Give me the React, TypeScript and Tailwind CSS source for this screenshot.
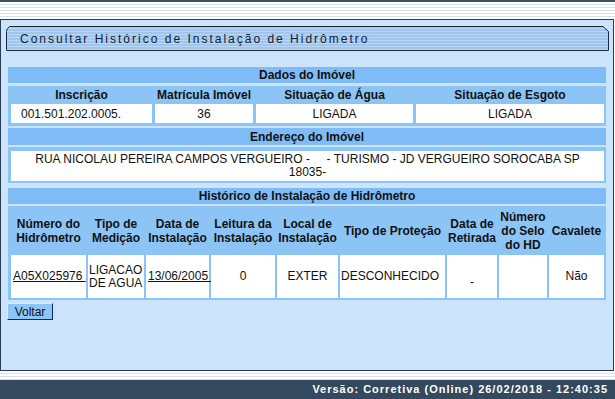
const dadosCols = "grid grid-cols-[141px_98px_157px_188px] gap-x-[3px]";
const histCols = "grid grid-cols-[75px_56px_63px_64px_61px_105px_50px_48px_55px] gap-x-[2px]";

function TitleTab() {
  return (
    <div className="relative ml-[5px] mt-[6px] h-[25px] w-[603px]">
      <svg className="absolute inset-0" width="603" height="25" viewBox="0 0 603 25">
        <defs>
          <pattern id="tabStripes" width="4" height="3" patternUnits="userSpaceOnUse">
            <rect width="4" height="3" fill="#9fc6ef" />
            <rect y="2" width="4" height="1" fill="#bad7f5" />
          </pattern>
        </defs>
        <path
          d="M0.5 24.5 L0.5 5.5 Q0.5 3.5 2 2 L3.5 0.5 L597 0.5 L602.5 5.5 L602.5 24.5 Z"
          fill="url(#tabStripes)"
          stroke="#1c2a3a"
          strokeWidth="1"
        />
      </svg>
      <div className="relative flex h-full items-center pl-[14px] text-[12px] tracking-[2px] text-[#14202e]">
        Consultar Histórico de Instalação de Hidrômetro
      </div>
    </div>
  );
}

function SectionHeader({ title, className }: { title: string; className?: string }) {
  return (
    <div className={"flex items-center justify-center bg-[#7fbcf7] font-bold " + (className ?? "")}>
      {title}
    </div>
  );
}

function App() {
  return (
    <div className="h-[399px] w-[615px] overflow-hidden bg-white font-['Liberation_Sans',Arial,sans-serif] text-[12px] text-[#111]">
      <div className="h-[2px] bg-[#3b5166]" />
      <div className="h-[17px] bg-[repeating-linear-gradient(to_bottom,#ffffff_0px,#ffffff_2px,#d3e1ea_2px,#d3e1ea_3px)]" />

      <div className="flex h-[352px] w-[614px] flex-col border border-[#2b3d50] bg-[#cbe4fb]">
        <TitleTab />

        <div className="ml-[7px] mt-[16px] flex w-[598px] flex-col">
          {/* Dados do Imóvel */}
          <SectionHeader title="Dados do Imóvel" className="h-[16px]" />
          <div className="mt-[3px] bg-[#8cc4f6] px-[3px] pb-[3px]">
            <div className={dadosCols + " h-[18px] items-center text-center font-bold"}>
              <div>Inscrição</div>
              <div>Matrícula Imóvel</div>
              <div>Situação de Água</div>
              <div>Situação de Esgoto</div>
            </div>
            <div className={dadosCols + " h-[19px]"}>
              <div className="flex items-center bg-white pl-[10px]">001.501.202.0005.</div>
              <div className="flex items-center justify-center bg-white">36</div>
              <div className="flex items-center justify-center bg-white">LIGADA</div>
              <div className="flex items-center justify-center bg-white">LIGADA</div>
            </div>
          </div>

          {/* Endereço do Imóvel */}
          <SectionHeader title="Endereço do Imóvel" className="mt-[2px] h-[17px]" />
          <div className="mt-[2px] bg-[#8cc4f6] px-[3px] pb-[2px] pt-[4px]">
            <div className="flex h-[30px] w-[593px] items-center justify-center bg-white text-center leading-[13px]">
              <div>
                RUA NICOLAU PEREIRA CAMPOS VERGUEIRO -&nbsp;&nbsp;&nbsp;&nbsp;&nbsp;- TURISMO - JD VERGUEIRO SOROCABA SP
                <br />
                18035-
              </div>
            </div>
          </div>

          {/* Histórico de Instalação de Hidrômetro */}
          <SectionHeader title="Histórico de Instalação de Hidrômetro" className="mt-[5px] h-[16px]" />
          <div className="mt-[2px] flex flex-col gap-y-[2px] bg-[#8cc4f6] px-[3px] pb-[2px] pt-[2px]">
            <div className={histCols + " h-[45px] items-center text-center font-bold leading-[14px]"}>
              <div>Número do<br />Hidrômetro</div>
              <div>Tipo de<br />Medição</div>
              <div>Data de<br />Instalação</div>
              <div>Leitura da<br />Instalação</div>
              <div>Local de<br />Instalação</div>
              <div>Tipo de Proteção</div>
              <div>Data de<br />Retirada</div>
              <div>Número<br />do Selo<br />do HD</div>
              <div>Cavalete</div>
            </div>
            <div className={histCols + " h-[43px] leading-[13px]"}>
              <div className="flex items-center bg-white pl-[2px]">
                <span className="underline">A05X025976&nbsp;</span>
              </div>
              <div className="flex items-center bg-white pl-[1px]">LIGACAO<br />DE AGUA</div>
              <div className="flex items-center bg-white pl-[2px]">
                <span className="underline">13/06/2005&nbsp;</span>
              </div>
              <div className="flex items-center justify-center bg-white">0</div>
              <div className="flex items-center justify-center bg-white">EXTER</div>
              <div className="flex items-center bg-white pl-[1px]">DESCONHECIDO</div>
              <div className="flex items-center justify-center bg-white pt-[12px]">-</div>
              <div className="bg-white" />
              <div className="flex items-center justify-center bg-white">Não</div>
            </div>
          </div>
        </div>

        <button className="ml-[6px] mt-[3px] h-[17px] w-[46px] border border-b-[#16265e] border-l-[#d9ecfc] border-r-[#16265e] border-t-[#d9ecfc] bg-[#8ec5f7] text-[12px] leading-none text-[#111]">
          Voltar
        </button>
      </div>

      <div className="h-[9px] bg-[repeating-linear-gradient(to_bottom,#ffffff_0px,#ffffff_2px,#d3e1ea_2px,#d3e1ea_3px)]" />
      <div className="flex h-[19px] items-center justify-end bg-[#34495e] pr-[7px] text-[11px] font-bold tracking-[1px] text-white">
        Versão: Corretiva (Online) 26/02/2018 - 12:40:35
      </div>
    </div>
  );
}

export default App;
